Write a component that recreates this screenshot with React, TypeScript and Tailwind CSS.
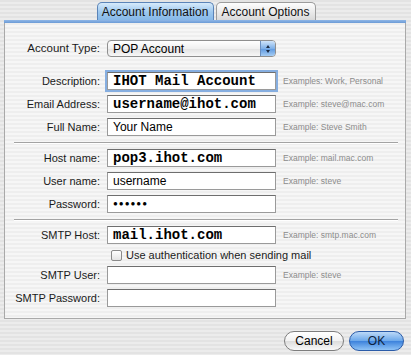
import React from "react";

const stripesOuter =
  "bg-[repeating-linear-gradient(to_bottom,#e3e3e3_0px,#e3e3e3_2px,#ececec_2px,#ececec_4px)]";
const stripesPanel =
  "bg-[repeating-linear-gradient(to_bottom,#eeeeee_0px,#eeeeee_2px,#f6f6f6_2px,#f6f6f6_4px)]";

const mono = "font-['Liberation_Mono','Courier_New',monospace] font-bold text-[14px] text-black";
const sans = "font-['Liberation_Sans',Arial,sans-serif] text-[12px] text-black";

function Field({
  label,
  value,
  example,
  mono: isMono,
  focus,
  mt = "mt-[5px]",
}: {
  label: string;
  value?: string;
  example?: string;
  mono?: boolean;
  focus?: boolean;
  mt?: string;
}) {
  return (
    <div className={`flex items-center h-[18px] ${mt}`}>
      <div className="w-[95px] text-right text-[11px] text-[#1a1a1a]">{label}</div>
      <div
        className={`ml-[7px] w-[169px] h-[18px] bg-white flex items-center pl-[5px] overflow-hidden border border-[#9a9a9a] border-t-[#6e6e6e] ${
          focus ? "outline-2 outline-[#86aee0] -outline-offset-0" : ""
        }`}
      >
        {value && <span className={isMono ? mono : sans}>{value}</span>}
      </div>
      {example && (
        <div className="ml-[7px] text-[8.5px] text-[#8c8c8c] whitespace-nowrap">{example}</div>
      )}
    </div>
  );
}

function Separator({ mt, mb }: { mt: string; mb: string }) {
  return (
    <div className={`${mt} ${mb} ml-[9px] w-[384px]`}>
      <div className="h-px bg-[#a3a3a3]" />
      <div className="h-px bg-white" />
    </div>
  );
}

export default function App() {
  return (
    <div
      className={`w-[411px] h-[355px] overflow-hidden ${stripesOuter} font-['Liberation_Sans',Arial,sans-serif]`}
    >
      {/* tabs */}
      <div className="h-[20px] flex justify-center items-end pl-[1px]">
        <div className="h-[18px] w-[117px] rounded-t-[5px] border border-b-0 border-[#5b84b8] bg-[linear-gradient(to_bottom,#d6eafb,#9cc7ee_55%,#86b8e8)] flex items-center justify-center text-[12px] text-[#111]">
          Account Information
        </div>
        <div className="ml-[2px] h-[18px] w-[100px] rounded-t-[5px] border border-b-0 border-[#9c9c9c] bg-[linear-gradient(to_bottom,#fdfdfd,#eaeaea_55%,#d9d9d9)] flex items-center justify-center text-[12px] text-[#111]">
          Account Options
        </div>
      </div>
      <div className="ml-[4px] w-[402px] h-[3px] bg-[linear-gradient(to_bottom,#8fb6e6,#6c9bd6)]" />

      {/* panel */}
      <div
        className={`ml-[4px] w-[402px] ${stripesPanel} border border-t-0 border-[#a9a9a9] pt-[17px] pb-[11px]`}
      >
        <div className="flex items-center h-[17px]">
          <div className="w-[95px] text-right text-[11.5px] text-[#1a1a1a]">Account Type:</div>
          <div className="ml-[7px] w-[169px] h-[17px] rounded-[4px] border border-[#8f8f8f] bg-[linear-gradient(to_bottom,#ffffff,#f0f0f0_50%,#e2e2e2_51%,#f7f7f7)] flex items-center overflow-hidden">
            <span className="pl-[5px] flex-1 text-[12px] text-black">POP Account</span>
            <div className="w-[15px] h-full bg-[linear-gradient(to_bottom,#cfe4fa,#7eb0e8_50%,#5c98e0_51%,#a6cdf4)] border-l border-[#6a8fc0] flex flex-col items-center justify-center gap-[2px]">
              <div className="w-0 h-0 border-x-[2.5px] border-x-transparent border-b-[3px] border-b-[#1c2c44]" />
              <div className="w-0 h-0 border-x-[2.5px] border-x-transparent border-t-[3px] border-t-[#1c2c44]" />
            </div>
          </div>
        </div>

        <Field
          label="Description:"
          value="IHOT Mail Account"
          example="Examples: Work, Personal"
          mono
          focus
          mt="mt-[15px]"
        />
        <Field label="Email Address:" value="username@ihot.com" example="Example: steve@mac.com" mono />
        <Field label="Full Name:" value="Your Name" example="Example: Steve Smith" />

        <Separator mt="mt-[6px]" mb="mb-[5px]" />

        <Field label="Host name:" value="pop3.ihot.com" example="Example: mail.mac.com" mono mt="mt-0" />
        <Field label="User name:" value="username" example="Example: steve" />
        <div className="flex items-center h-[18px] mt-[5px]">
          <div className="w-[95px] text-right text-[11px] text-[#1a1a1a]">Password:</div>
          <div className="ml-[7px] w-[169px] h-[18px] bg-white flex items-center pl-[5px] border border-[#9a9a9a] border-t-[#6e6e6e] text-[8px] tracking-[1px] text-black">
            ●●●●●●
          </div>
        </div>

        <Separator mt="mt-[6px]" mb="mb-[5px]" />

        <Field label="SMTP Host:" value="mail.ihot.com" example="Example: smtp.mac.com" mono mt="mt-0" />
        <div className="flex items-center h-[12px] mt-[5px] pl-[106px]">
          <div className="w-[11px] h-[11px] border border-[#8a8a8a] rounded-[2px] bg-[linear-gradient(to_bottom,#ffffff,#e4e4e4)]" />
          <span className="ml-[4px] text-[11px] text-[#1a1a1a]">Use authentication when sending mail</span>
        </div>
        <Field label="SMTP User:" example="Example: steve" />
        <Field label="SMTP Password:" />
      </div>

      {/* buttons */}
      <div className="flex justify-end mt-[12px] pr-[7px]">
        <button className="w-[60px] h-[20px] rounded-full border border-[#7d7d7d] bg-[linear-gradient(to_bottom,#ffffff,#f2f2f2_50%,#dcdcdc_51%,#f8f8f8)] text-[12px] text-black">
          Cancel
        </button>
        <button className="ml-[5px] w-[55px] h-[20px] rounded-full border border-[#2a5ba8] bg-[linear-gradient(to_bottom,#bcd9f8,#6aa7ea_50%,#3c82dc_51%,#8fc3f6)] text-[12px] text-[#0d1f3c]">
          OK
        </button>
      </div>
    </div>
  );
}
